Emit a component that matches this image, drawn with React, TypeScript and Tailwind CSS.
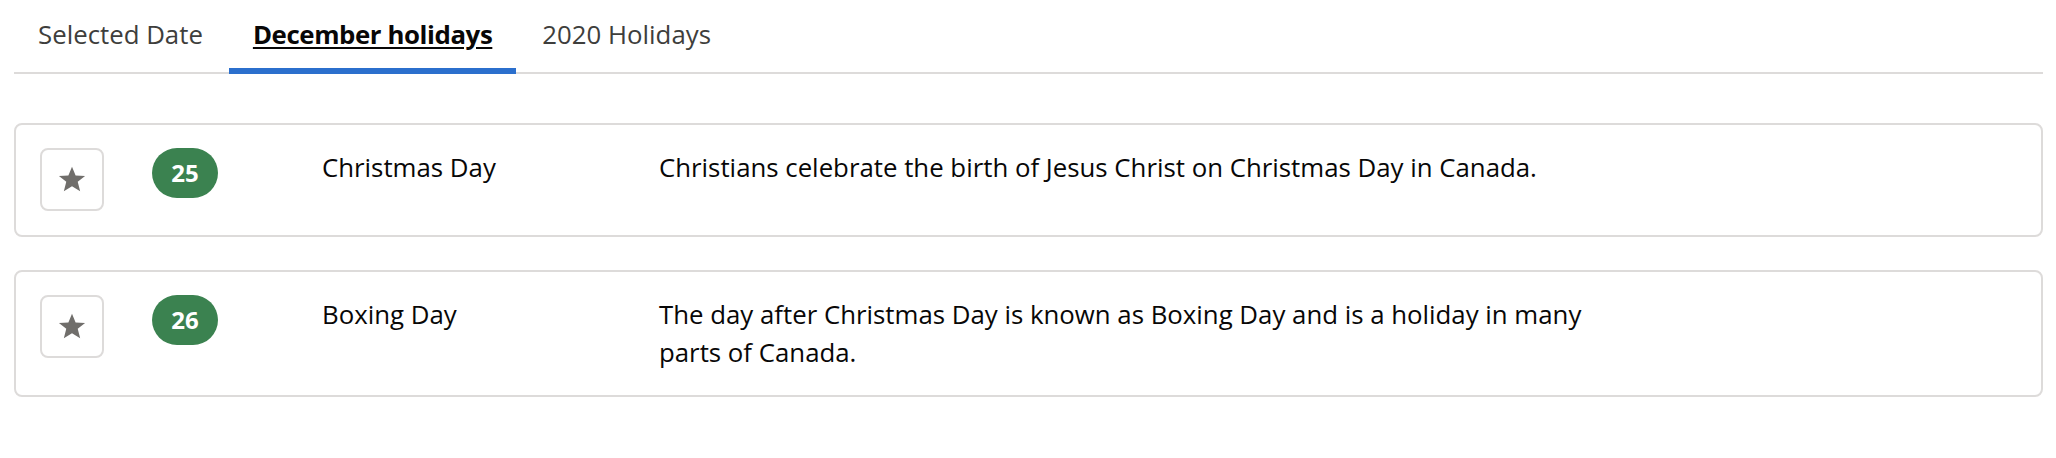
import React from 'react';

type Holiday = { day: string; name: string; description: string };

const holidays: Holiday[] = [
  {
    day: '25',
    name: 'Christmas Day',
    description: 'Christians celebrate the birth of Jesus Christ on Christmas Day in Canada.',
  },
  {
    day: '26',
    name: 'Boxing Day',
    description:
      'The day after Christmas Day is known as Boxing Day and is a holiday in many parts of Canada.',
  },
];

const Star = () => (
  <svg width="28" height="27" viewBox="0 0 24 23" fill="#706e6b" aria-hidden="true">
    <polygon points="12,0.5 15.1,8 23.2,8.4 16.9,13.5 19,21.6 12,17.2 5,21.6 7.1,13.5 0.8,8.4 8.9,8" />
  </svg>
);

const tabs = ['Selected Date', 'December holidays', '2020 Holidays'];

export default function App() {
  return (
    <div
      className="w-full min-h-[458px] bg-white pl-[14px] pr-[13px] text-[25.8px] leading-[38px] text-[#080707]"
      style={{ fontFamily: '"Open Sans", "Liberation Sans", sans-serif' }}
    >
      <div className="flex border-b-2 border-[#dddbda]">
        {tabs.map((t, i) => {
          const active = i === 1;
          return (
            <div
              key={t}
              className={
                active
                  ? 'flex h-[74px] -mb-[2px] items-start border-b-[6px] border-[#2b6fcd] px-6 pt-[15px] font-bold tracking-[-0.4px] text-[#080707] underline underline-offset-[3px] mr-[2px]'
                  : 'flex h-[72px] items-start px-6 pt-[15px] text-[#3e3e3c] mr-[2px]'
              }
            >
              {t}
            </div>
          );
        })}
      </div>

      <div className="mt-[49px] flex flex-col gap-[33px]">
        {holidays.map((h) => (
          <div
            key={h.day}
            className="flex items-start rounded-[8px] border-2 border-[#dddbda] pl-6 pt-[23px] pb-[24px]"
          >
            <div className="w-[112px] shrink-0">
              <button className="flex h-[63px] w-[64px] items-center justify-center rounded-[8px] border-2 border-[#dddbda] bg-white">
                <Star />
              </button>
            </div>
            <div className="w-[170px] shrink-0">
              <span className="flex h-[50px] w-[66px] items-center justify-center rounded-full bg-[#3b8250] text-[24px] font-bold text-white">
                {h.day}
              </span>
            </div>
            <div className="w-[337px] shrink-0">{h.name}</div>
            <div className="w-[960px] shrink-0">{h.description}</div>
          </div>
        ))}
      </div>
    </div>
  );
}
